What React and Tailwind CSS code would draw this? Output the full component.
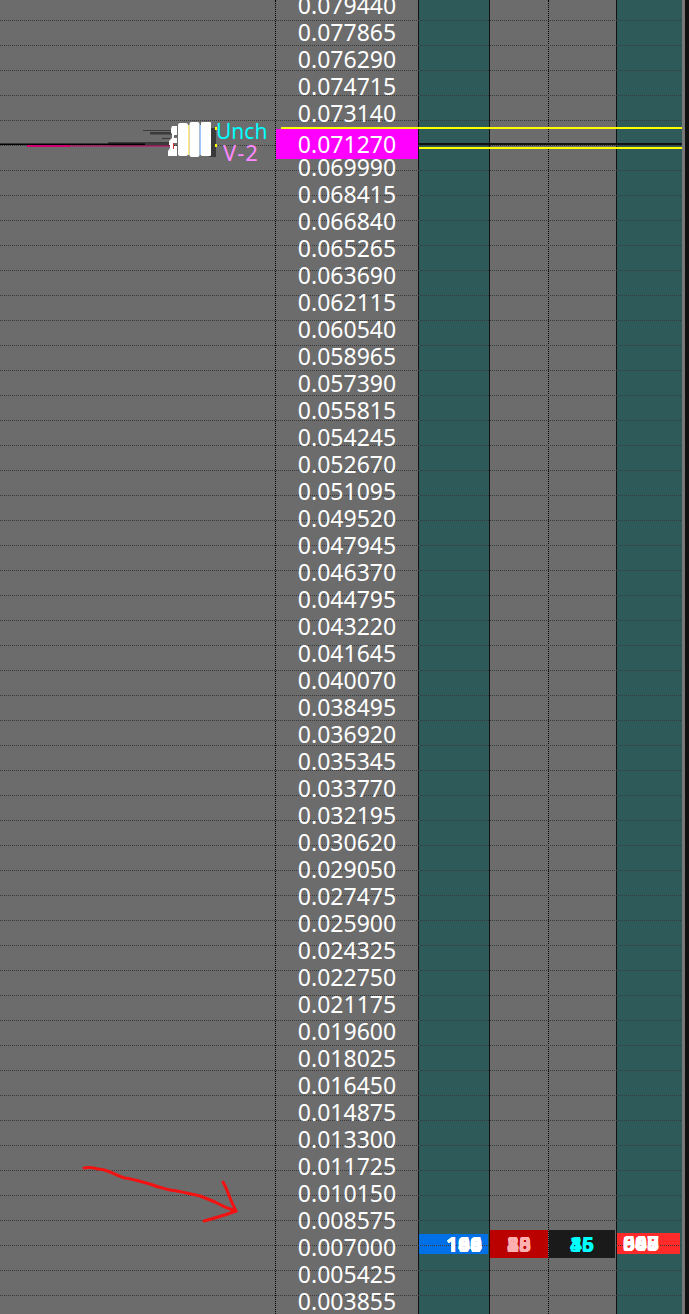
import React from "react";

const prices = [
  "0.079440", "0.077865", "0.076290", "0.074715", "0.073140", "0.071565", "0.069990", "0.068415",
  "0.066840", "0.065265", "0.063690", "0.062115", "0.060540", "0.058965", "0.057390", "0.055815",
  "0.054245", "0.052670", "0.051095", "0.049520", "0.047945", "0.046370", "0.044795", "0.043220",
  "0.041645", "0.040070", "0.038495", "0.036920", "0.035345", "0.033770", "0.032195", "0.030620",
  "0.029050", "0.027475", "0.025900", "0.024325", "0.022750", "0.021175", "0.019600", "0.018025",
  "0.016450", "0.014875", "0.013300", "0.011725", "0.010150", "0.008575", "0.007000", "0.005425",
  "0.003855",
];

const gridRows = Array.from({ length: 53 }, (_, i) => i);

// several values printed on the same spot, like the platform does
const Stacked = ({ values, className = "" }) => (
  <div className={`relative z-10 grid text-[21px] leading-none font-bold ${className}`}>
    {values.map((v, i) => (
      <span key={i} className="col-start-1 row-start-1 text-right">
        {v}
      </span>
    ))}
  </div>
);

const ChartBlob = () => (
  <svg className="absolute left-0 top-[115px] z-10" width="220" height="50" viewBox="0 0 220 50">
    <rect x="108" y="27" width="62" height="4" fill="#3a3a3a" />
    <rect x="143" y="15" width="28" height="1" fill="#3a3a3a" />
    <rect x="150" y="17" width="22" height="2.5" fill="#3a3a3a" />
    <rect x="162" y="23" width="8" height="1" fill="#3a3a3a" />
    <rect x="27" y="30" width="43" height="2" fill="#d0006f" />
    <rect x="70" y="30.5" width="100" height="1" fill="#d0006f" />
    <rect x="0" y="28.5" width="145" height="1.5" fill="#000" />
    <rect x="209" y="13" width="7" height="29" fill="#3a3a3a" />
    <rect x="215" y="12" width="2" height="3" fill="#ffff00" />
    <rect x="215" y="29" width="2" height="3" fill="#ffff00" />
    <path d="M172 11h5v9h-3v3h3v5h-3v3h3v10h-9v-5l2-3v-3h-1v-4l3-3v-4l-1-1v-4z" fill="#fff" />
    <rect x="173" y="28" width="1" height="6" fill="#e03030" />
    <rect x="178" y="8" width="10" height="33" rx="2" fill="#fff" />
    <rect x="188" y="10" width="1.5" height="30" fill="#ffe97a" />
    <rect x="189.5" y="7" width="10" height="35" rx="2" fill="#fff" />
    <rect x="199.5" y="10" width="1.5" height="30" fill="#9fc8ff" />
    <rect x="201" y="7" width="10" height="34" rx="1" fill="#fff" />
  </svg>
);

const RedArrow = () => (
  <svg className="absolute left-[80px] top-[1160px] z-10" width="165" height="70" viewBox="0 0 165 70" fill="none">
    <path
      d="M4 8C9 7 14 8 18 9C23 9 27 11 30 12C35 14 40 17 45 18C53 19 62 22 70 24C77 27 83 28 90 30C100 31 110 34 120 36C126 38 130 40 135 42C142 46 149 49 156 51"
      stroke="#f31212"
      strokeWidth="3"
      strokeLinecap="round"
      strokeLinejoin="round"
    />
    <path d="M143 22C146 27 148 33 150 38C152 43 154 47 156 51C146 55 135 58 124 61" stroke="#f31212" strokeWidth="3" strokeLinecap="round" strokeLinejoin="round" />
  </svg>
);

export default function App() {
  return (
    <div className="relative flex h-[1314px] w-[689px] overflow-hidden bg-[#6c6c6c] font-['Noto_Sans','Open_Sans',sans-serif]">
      {/* chart pane */}
      <div className="w-[276px] shrink-0 border-r border-dotted border-[#000]" />

      {/* price ladder */}
      <div className="relative w-[143px] shrink-0 border-r border-[#111]">
        <div className="relative z-10 -mt-[8px]">
          {prices.map((p) => (
            <div key={p} className="flex h-[27px] items-center justify-center text-[23px] leading-none text-white">
              {p}
            </div>
          ))}
        </div>
        <div className="absolute inset-x-0 top-[129px] z-10 flex h-[30px] items-center justify-center bg-[#ff00ff] pt-[1px] text-[23px] leading-none text-white">
          0.071270
        </div>
      </div>

      {/* volume columns */}
      <div className="flex w-[71px] shrink-0 flex-col justify-end border-r border-[#111] bg-[#2f5a5a] pb-[60px]">
        <div className="flex h-[20px] w-[69px] items-center justify-end bg-[#0070e6] pr-[6px] text-white">
          <Stacked values={["100", "144", "188", "166", "199"]} />
        </div>
      </div>
      <div className="flex w-[59px] shrink-0 flex-col justify-end border-r border-dotted border-[#000] pb-[56px]">
        <div className="relative z-10 flex h-[28px] items-center justify-center bg-[#bb0000] text-[#ffb0b0]">
          <Stacked values={["23", "38", "88", "40", "55"]} />
        </div>
      </div>
      <div className="flex w-[68px] shrink-0 flex-col justify-end border-r border-[#111] pb-[56px]">
        <div className="relative z-10 flex h-[28px] w-[66px] items-center justify-center bg-[#1a1a1a] text-[#00ffff]">
          <Stacked values={["45", "46", "35", "15"]} />
        </div>
      </div>
      <div className="flex w-[65px] shrink-0 flex-col justify-end bg-[#2f5a5a] pb-[60px]">
        <div className="flex h-[21px] w-[63px] items-center bg-[#ff2b2b] pl-[6px] text-white">
          <Stacked values={["300", "688", "888", "607", "943"]} />
        </div>
      </div>
      <div className="w-[3px] shrink-0 bg-[#777]" />
      <div className="flex-1 bg-[#111]" />

      {/* horizontal grid */}
      <div className="absolute left-0 right-[8px] top-[-4px]">
        {gridRows.map((r) => (
          <div key={r} className="h-[25px] border-b border-dotted border-[#383838]" />
        ))}
      </div>

      {/* current price lines */}
      <div className="absolute left-[281px] right-[7px] top-[127px] z-10 h-[2px] bg-[#ffff00]" />
      <div className="absolute left-[419px] right-[7px] top-[143px] z-10 h-[2px] bg-[#111]" />
      <div className="absolute left-[419px] right-[7px] top-[147px] z-10 h-[2px] bg-[#ffff00]" />

      <ChartBlob />
      <div className="absolute left-[216px] top-[117px] z-10 text-[21px] leading-[28px] text-[#00ffff]">Unch</div>
      <div className="absolute left-[223px] top-[138px] z-10 text-[22px] leading-[28px] tracking-[1px] text-[#ff88ff]">V-2</div>

      <RedArrow />
    </div>
  );
}
